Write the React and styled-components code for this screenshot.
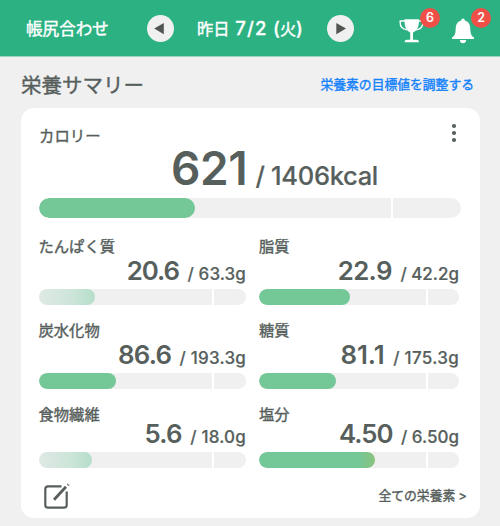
import React from "react";
import styled, { createGlobalStyle } from "styled-components";

const Global = createGlobalStyle`
  * { box-sizing: border-box; }
  body {
    margin: 0;
    background: #f0f0f0;
    color: #575f5d;
    font-family: Inter, "Noto Sans CJK JP", sans-serif;
    -webkit-font-smoothing: antialiased;
  }
  button { border: 0; padding: 0; background: none; color: inherit; font: inherit; }
  svg { display: block; }
`;

const Screen = styled.div`
  width: 500px;
  height: 526px;
  overflow: hidden;
`;

const Header = styled.header`
  display: flex;
  align-items: center;
  height: 57px;
  padding-left: 26px;
  background: #2bb182;
  border-bottom: 1px solid #9fd3bf;
  color: #fff;
`;

const Jp = styled.span`
  font-family: "Noto Sans CJK JP", sans-serif;
  font-weight: 400;
  font-size: ${(p) => p.$size}px;
  line-height: 1;
  white-space: nowrap;
  -webkit-text-stroke: ${(p) => p.$stroke ?? 0.4}px currentColor;
`;

const AdjustButton = styled.button`
  display: flex;
  width: 121px;
`;

const RoundButton = styled.button`
  display: grid;
  place-items: center;
  width: 27px;
  height: 27px;
  border-radius: 50%;
  background: #f0f0f0;
`;

const DateLabel = styled.div`
  display: flex;
  align-items: center;
  justify-content: center;
  width: 153px;
  padding-right: 1px;
  gap: 5.5px;
  font-size: 18.5px;
  font-weight: 500;
  line-height: 1;
  white-space: nowrap;
  -webkit-text-stroke: 0.3px currentColor;
`;

const DayNumber = styled.span`
  letter-spacing: 1.2px;
`;

const Weekday = styled.span`
  display: flex;
  align-items: center;
`;

const HeaderIcon = styled.button`
  position: relative;
  width: ${(p) => p.$width}px;
  height: 26px;
  margin-left: ${(p) => p.$left}px;
  margin-top: 5px;
`;

const Badge = styled.span`
  position: absolute;
  left: ${(p) => p.$left}px;
  top: -9.5px;
  width: 20px;
  height: 20px;
  border-radius: 50%;
  background: #f04f48;
  color: #fff;
  font-size: 12.5px;
  font-weight: 500;
  line-height: 20px;
  text-align: center;
  -webkit-text-stroke: 0.2px currentColor;
`;

const SectionHead = styled.div`
  display: flex;
  align-items: center;
  justify-content: space-between;
  height: 51px;
  padding: 3px 26px 0 21px;
`;

const Link = styled.a`
  display: flex;
  color: #1683fc;
`;

const Card = styled.main`
  width: 459px;
  height: 410px;
  margin-left: 21px;
  padding: 0 18px;
  border-radius: 13px;
  background: #fff;
`;

const Calories = styled.section`
  height: 122px;
  padding-top: 15px;
`;

const CalorieHead = styled.div`
  display: flex;
  justify-content: space-between;
  height: 23px;
  padding-top: 5px;
`;

const MenuButton = styled.button`
  width: 14px;
  height: 22px;
  margin: -6px 1px 0 0;
`;

const CalorieValue = styled.div`
  display: flex;
  align-items: baseline;
  justify-content: flex-end;
  height: 51.5px;
  padding-right: 84px;
  line-height: 45px;
  font-weight: 600;
`;

const Big = styled.span`
  font-size: 46px;
  letter-spacing: -0.4px;
`;

const CalorieGoal = styled.span`
  margin-left: 8px;
  font-size: 25.5px;
  font-weight: 500;
  letter-spacing: -0.3px;
  -webkit-text-stroke: 0.2px currentColor;
`;

const Track = styled.div`
  display: grid;
  grid-template-columns: minmax(0, 1fr) ${(p) => p.$tail}px;
  width: ${(p) => p.$width ?? "100%"};
  column-gap: 2.5px;
  height: ${(p) => p.$height}px;
  border-radius: 11px;
  overflow: hidden;
`;

const Segment = styled.div`
  background: #f0f0f0;
`;

const fills = {
  normal: "#74c797",
  low: "linear-gradient(90deg, #dfe9e4, #cce5d9 60%, #b5dec9)",
  near: "linear-gradient(90deg, #74c797 86%, #8bc37e)",
};

const Fill = styled.div`
  height: 100%;
  border-radius: 11px;
  background: ${(p) => fills[p.$tone]};
`;

const NutrientGrid = styled.section`
  display: grid;
  grid-template-columns: 207.5px 200px;
  grid-template-rows: 84px 84px 79px;
  column-gap: 13px;
  margin-left: -0.5px;
`;

const Nutrient = styled.article`
  padding-top: 8px;
`;

const NutrientLabel = styled.div`
  display: flex;
  height: 15px;
`;

const Value = styled.div`
  display: flex;
  align-items: baseline;
  justify-content: flex-end;
  height: ${(p) => (p.$compact ? 31 : 36)}px;
  line-height: ${(p) => (p.$compact ? 25 : 36)}px;
  white-space: nowrap;
`;

const Amount = styled.span`
  font-size: 25.8px;
  font-weight: 600;
  letter-spacing: ${(p) => p.$spacing}px;
`;

const Goal = styled.span`
  margin-left: 8.5px;
  font-size: 17px;
  font-weight: 500;
  letter-spacing: ${(p) => p.$spacing}px;
  -webkit-text-stroke: 0.2px currentColor;
`;

const CardFooter = styled.footer`
  display: flex;
  align-items: flex-start;
  justify-content: space-between;
  padding: 6px 0 0 3.5px;
`;

const AllLink = styled.a`
  display: flex;
  align-items: center;
  gap: 3px;
  margin: 6px -5px 0 0;
  font-size: 13px;
  font-weight: 600;
  line-height: 1;
`;

const nutrients = [
  { name: "たんぱく質", amount: "20.6", goal: "63.3g", fill: 56, tone: "low", spacing: -1, goalSpacing: 0.1 },
  { name: "脂質", amount: "22.9", goal: "42.2g", fill: 90.5, tone: "normal", spacing: -0.6, goalSpacing: 0 },
  { name: "炭水化物", amount: "86.6", goal: "193.3g", fill: 77.5, tone: "normal", spacing: -0.8, goalSpacing: 0.2 },
  { name: "糖質", amount: "81.1", goal: "175.3g", fill: 77, tone: "normal", spacing: 0, goalSpacing: 0.3 },
  { name: "食物繊維", amount: "5.6", goal: "18.0g", fill: 53.5, tone: "low", spacing: -0.8, goalSpacing: 0.2 },
  { name: "塩分", amount: "4.50", goal: "6.50g", fill: 115.5, tone: "near", spacing: -1, goalSpacing: 0 },
];

function Meter({ width, height, tail, fill, tone }) {
  return (
    <Track $width={width} $height={height} $tail={tail}>
      <Segment>
        <Fill $tone={tone} style={{ width: fill }} />
      </Segment>
      <Segment />
    </Track>
  );
}

function Triangle({ right }) {
  return (
    <svg width="27" height="27" viewBox="0 0 27 27">
      <path d={right ? "M9.3 8 V19.3 L19 13.6 Z" : "M16.8 8 V19.3 L7.2 13.6 Z"} fill="#505552" />
    </svg>
  );
}

export default function App() {
  return (
    <Screen>
      <Global />
      <Header>
        <AdjustButton><Jp $size={16.6}>帳尻合わせ</Jp></AdjustButton>
        <RoundButton aria-label="前日"><Triangle /></RoundButton>
        <DateLabel>
          <Jp $size={16.3}>昨日</Jp>
          <DayNumber>7/2</DayNumber>
          <Weekday>(<Jp $size={16.2}>火</Jp>)</Weekday>
        </DateLabel>
        <RoundButton aria-label="翌日"><Triangle right /></RoundButton>
        <HeaderIcon $width={26} $left={45}>
          <svg width="26" height="26" viewBox="0 0 26 26">
            <path d="M5.5 1.2H20V3Q20 12 14 14.5V21.8H17.5Q20 21.8 20 24.2H5.5Q5.5 21.8 8 21.8H11.2V14.5Q5.5 12 5.5 3Z" fill="#fff" />
            <path d="M6 3H1.2Q.5 11 8 11.8M19.5 3H24Q24.5 11 17 11.8" fill="none" stroke="#fff" strokeWidth="1.4" />
          </svg>
          <Badge $left={21}>6</Badge>
        </HeaderIcon>
        <HeaderIcon $width={24} $left={26}>
          <svg width="24" height="26" viewBox="0 0 24 26">
            <path d="M12 .5C13.2 .5 13.7 1.3 13.7 2.5C18 3.5 19.2 7 19.3 11C19.5 16.5 20.8 18 23 19.6V21H1V19.6C3.2 18 4.5 16.5 4.7 11C4.8 7 6 3.5 10.3 2.5C10.3 1.3 10.8 .5 12 .5ZM8.8 22H15.2Q14.8 25.2 12 25.2Q9.2 25.2 8.8 22Z" fill="#fff" />
          </svg>
          <Badge $left={20}>2</Badge>
        </HeaderIcon>
      </Header>
      <SectionHead>
        <Jp $size={20.5}>栄養サマリー</Jp>
        <Link><Jp $size={12.8}>栄養素の目標値を調整する</Jp></Link>
      </SectionHead>
      <Card>
        <Calories>
          <CalorieHead>
            <Jp $size={15.4}>カロリー</Jp>
            <MenuButton aria-label="メニュー">
              <svg width="14" height="22" viewBox="0 0 14 22" fill="#575f5d">
                <circle cx="7" cy="4" r="2.1" /><circle cx="7" cy="11" r="2.1" /><circle cx="7" cy="18" r="2.1" />
              </svg>
            </MenuButton>
          </CalorieHead>
          <CalorieValue>
            <Big>621</Big>
            <CalorieGoal>/ 1406kcal</CalorieGoal>
          </CalorieValue>
          <Meter width="421.5px" height={20.5} tail={67.5} fill={155.5} tone="normal" />
        </Calories>
        <NutrientGrid>
          {nutrients.map((n, i) => (
            <Nutrient key={n.name}>
              <NutrientLabel><Jp $size={15.3}>{n.name}</Jp></NutrientLabel>
              <Value $compact={i > 3}>
                <Amount $spacing={n.spacing}>{n.amount}</Amount>
                <Goal $spacing={n.goalSpacing}>/ {n.goal}</Goal>
              </Value>
              <Meter height={15.5} tail={i % 2 ? 31 : 32} fill={n.fill} tone={n.tone} />
            </Nutrient>
          ))}
        </NutrientGrid>
        <CardFooter>
          <button aria-label="編集">
            <svg width="28" height="28" viewBox="0 0 28 28" fill="none" stroke="#575f5d">
              <path d="M18.5 3.3H5Q2.3 3.3 2.3 6V22Q2.3 24.7 5 24.7H21Q23.7 24.7 23.7 22V8.5" strokeWidth="2.2" />
              <path d="M11 16.8L23 3.8" strokeWidth="2.8" />
              <path d="M24.8 2.2L25.5 1.4" strokeWidth="2.8" />
            </svg>
          </button>
          <AllLink><Jp $size={12.8}>全ての栄養素</Jp><span>&gt;</span></AllLink>
        </CardFooter>
      </Card>
    </Screen>
  );
}
